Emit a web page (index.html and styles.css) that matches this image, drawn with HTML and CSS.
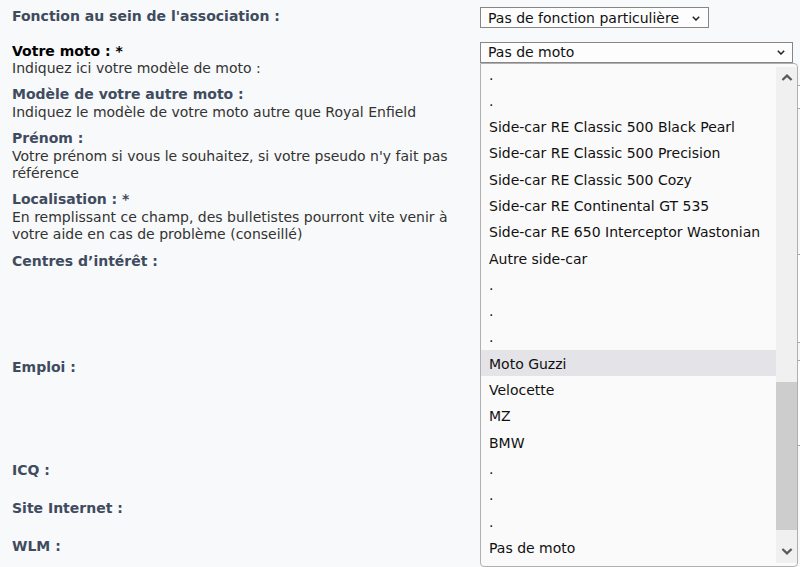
FILE: index.html
```html
<!DOCTYPE html>
<html lang="fr">
<head>
<meta charset="utf-8">
<title>Profil</title>
<link rel="stylesheet" href="styles.css">
</head>
<body>
<form class="profile">
  <div class="row r1">
    <div class="lbl"><b class="t">Fonction au sein de l'association :</b></div>
    <div class="fld">
      <div class="select sel-fn"><span>Pas de fonction particulière</span><svg class="chev" width="8" height="5" viewBox="0 0 8 5"><path d="M0.8 0.8L4 4 7.2 0.8" fill="none" stroke="#222" stroke-width="1.5"/></svg></div>
    </div>
  </div>

  <div class="row r2">
    <div class="lbl"><b class="t req">Votre moto : *</b><span class="desc">Indiquez ici votre modèle de moto :</span></div>
    <div class="fld">
      <div class="combo">
        <div class="select sel-moto"><span>Pas de moto</span><svg class="chev" width="8" height="5" viewBox="0 0 8 5"><path d="M0.8 0.8L4 4 7.2 0.8" fill="none" stroke="#222" stroke-width="1.5"/></svg></div>
        <div class="menu">
          <div class="list">
            <ul class="opts">
              <li>.</li>
              <li>.</li>
              <li>Side-car RE Classic 500 Black Pearl</li>
              <li>Side-car RE Classic 500 Precision</li>
              <li>Side-car RE Classic 500 Cozy</li>
              <li>Side-car RE Continental GT 535</li>
              <li>Side-car RE 650 Interceptor Wastonian</li>
              <li>Autre side-car</li>
              <li>.</li>
              <li>.</li>
              <li>.</li>
              <li class="hover">Moto Guzzi</li>
              <li>Velocette</li>
              <li>MZ</li>
              <li>BMW</li>
              <li>.</li>
              <li>.</li>
              <li>.</li>
              <li>Pas de moto</li>
            </ul>
          </div>
          <div class="sbar">
            <div class="sbtn"><svg width="12" height="7" viewBox="0 0 12 7"><path d="M1.4 6L6 1.6 10.6 6" fill="none" stroke="#5a5a5a" stroke-width="2.3"/></svg></div>
            <div class="track"><div class="thumb"></div></div>
            <div class="sbtn"><svg width="12" height="7" viewBox="0 0 12 7"><path d="M1.4 1L6 5.4 10.6 1" fill="none" stroke="#5a5a5a" stroke-width="2.3"/></svg></div>
          </div>
        </div>
      </div>
    </div>
  </div>

  <div class="row r3">
    <div class="lbl"><b class="t">Modèle de votre autre moto :</b><span class="desc">Indiquez le modèle de votre moto autre que Royal Enfield</span></div>
    <div class="fld"><input class="inp wide" type="text"></div>
  </div>

  <div class="row r4">
    <div class="lbl"><b class="t">Prénom :</b><span class="desc">Votre prénom si vous le souhaitez, si votre pseudo n'y fait pas référence</span></div>
    <div class="fld"><input class="inp" type="text"></div>
  </div>

  <div class="row r5">
    <div class="lbl"><b class="t">Localisation : *</b><span class="desc">En remplissant ce champ, des bulletistes pourront vite venir à votre aide en cas de problème (conseillé)</span></div>
    <div class="fld"><input class="inp" type="text"></div>
  </div>

  <div class="row r6">
    <div class="lbl"><b class="t">Centres d’intérêt :</b></div>
    <div class="fld"><textarea class="area a6"></textarea></div>
  </div>

  <div class="row r7">
    <div class="lbl"><b class="t">Emploi :</b></div>
    <div class="fld"><textarea class="area a7"></textarea></div>
  </div>

  <div class="row r8">
    <div class="lbl"><b class="t">ICQ :</b></div>
    <div class="fld"><input class="inp" type="text"></div>
  </div>

  <div class="row r9">
    <div class="lbl"><b class="t">Site Internet :</b></div>
    <div class="fld"><input class="inp" type="text"></div>
  </div>

  <div class="row r10">
    <div class="lbl"><b class="t">WLM :</b></div>
    <div class="fld"><input class="inp" type="text"></div>
  </div>
</form>
</body>
</html>
```

FILE: styles.css
```css
html, body {
  margin: 0;
  padding: 0;
  background: #f8f9fa;
  overflow: hidden;
}

body {
  font-family: "DejaVu Sans", Verdana, sans-serif;
  font-size: 14px;
  line-height: 17.4px;
  color: #333;
}

.profile {
  padding: 3px 0 0 12px;
}

.row {
  display: flex;
  padding: 4.5px 0;
}

.lbl {
  width: 468px;
  box-sizing: border-box;
  padding-right: 20px;
  flex: none;
}

.t {
  display: block;
  font-weight: bold;
  color: #3f4b5e;
}

.t.req {
  color: #000;
}

.desc {
  display: block;
  color: #333;
}

.fld {
  flex: 1;
  min-width: 0;
}

.r1 .fld { min-height: 26px; }
.r6 .fld { min-height: 97px; }
.r7 .fld { min-height: 94.4px; }
.r8 .fld, .r9 .fld, .r10 .fld { min-height: 29px; }

/* select-like controls */
.select {
  display: flex;
  align-items: center;
  justify-content: space-between;
  box-sizing: border-box;
  height: 21px;
  margin-top: -1px;
  border: 1px solid #868686;
  background: #fdfdfd;
  font-size: 14px;
  line-height: 16px;
  color: #111;
}

.sel-fn {
  width: 229px;
  padding: 2px 8px 0 7px;
}

.sel-moto {
  width: 313px;
  padding: 0 7px 0 7px;
}

.chev {
  flex: none;
}

.combo {
  position: relative;
}

/* open dropdown list */
.menu {
  position: absolute;
  top: 100%;
  left: 0;
  z-index: 5;
  width: 318px;
  height: 504px;
  box-sizing: border-box;
  display: flex;
  border: 1px solid #b0b0b0;
  border-radius: 0 4px 4px 4px;
  background: #fafafa;
  overflow: hidden;
}

.list {
  flex: 1;
  overflow: hidden;
}

.opts {
  list-style: none;
  margin: -3px 0 0 0;
  padding: 0;
}

.opts li {
  height: 26.3px;
  box-sizing: border-box;
  padding: 2px 0 0 8px;
  line-height: 24.3px;
  font-size: 14px;
  color: #111;
  white-space: nowrap;
}

.opts li.hover {
  background: #e3e3e8;
}

.sbar {
  flex: none;
  width: 21px;
  margin: 3px 0 3px 0;
  display: flex;
  flex-direction: column;
  background: #f0f0f0;
}

.sbtn {
  flex: none;
  height: 22px;
  display: flex;
  align-items: center;
  justify-content: center;
}

.track {
  flex: 1;
  padding-top: 293px;
}

.thumb {
  height: 148px;
  background: #cdcdcd;
}

/* fields hidden behind the open list */
.inp {
  display: block;
  box-sizing: border-box;
  width: 220px;
  height: 24px;
  margin: -1.5px 0 0 0;
  border: 1px solid #a9a9a9;
  background: #fff;
}

.inp.wide {
  width: 330px;
}

.area {
  display: block;
  box-sizing: border-box;
  width: 330px;
  margin: 1px 0 0 0;
  border: 1px solid #a9a9a9;
  background: #fff;
  resize: none;
}

.a6 { height: 89px; }
.a7 { height: 86px; }
```
